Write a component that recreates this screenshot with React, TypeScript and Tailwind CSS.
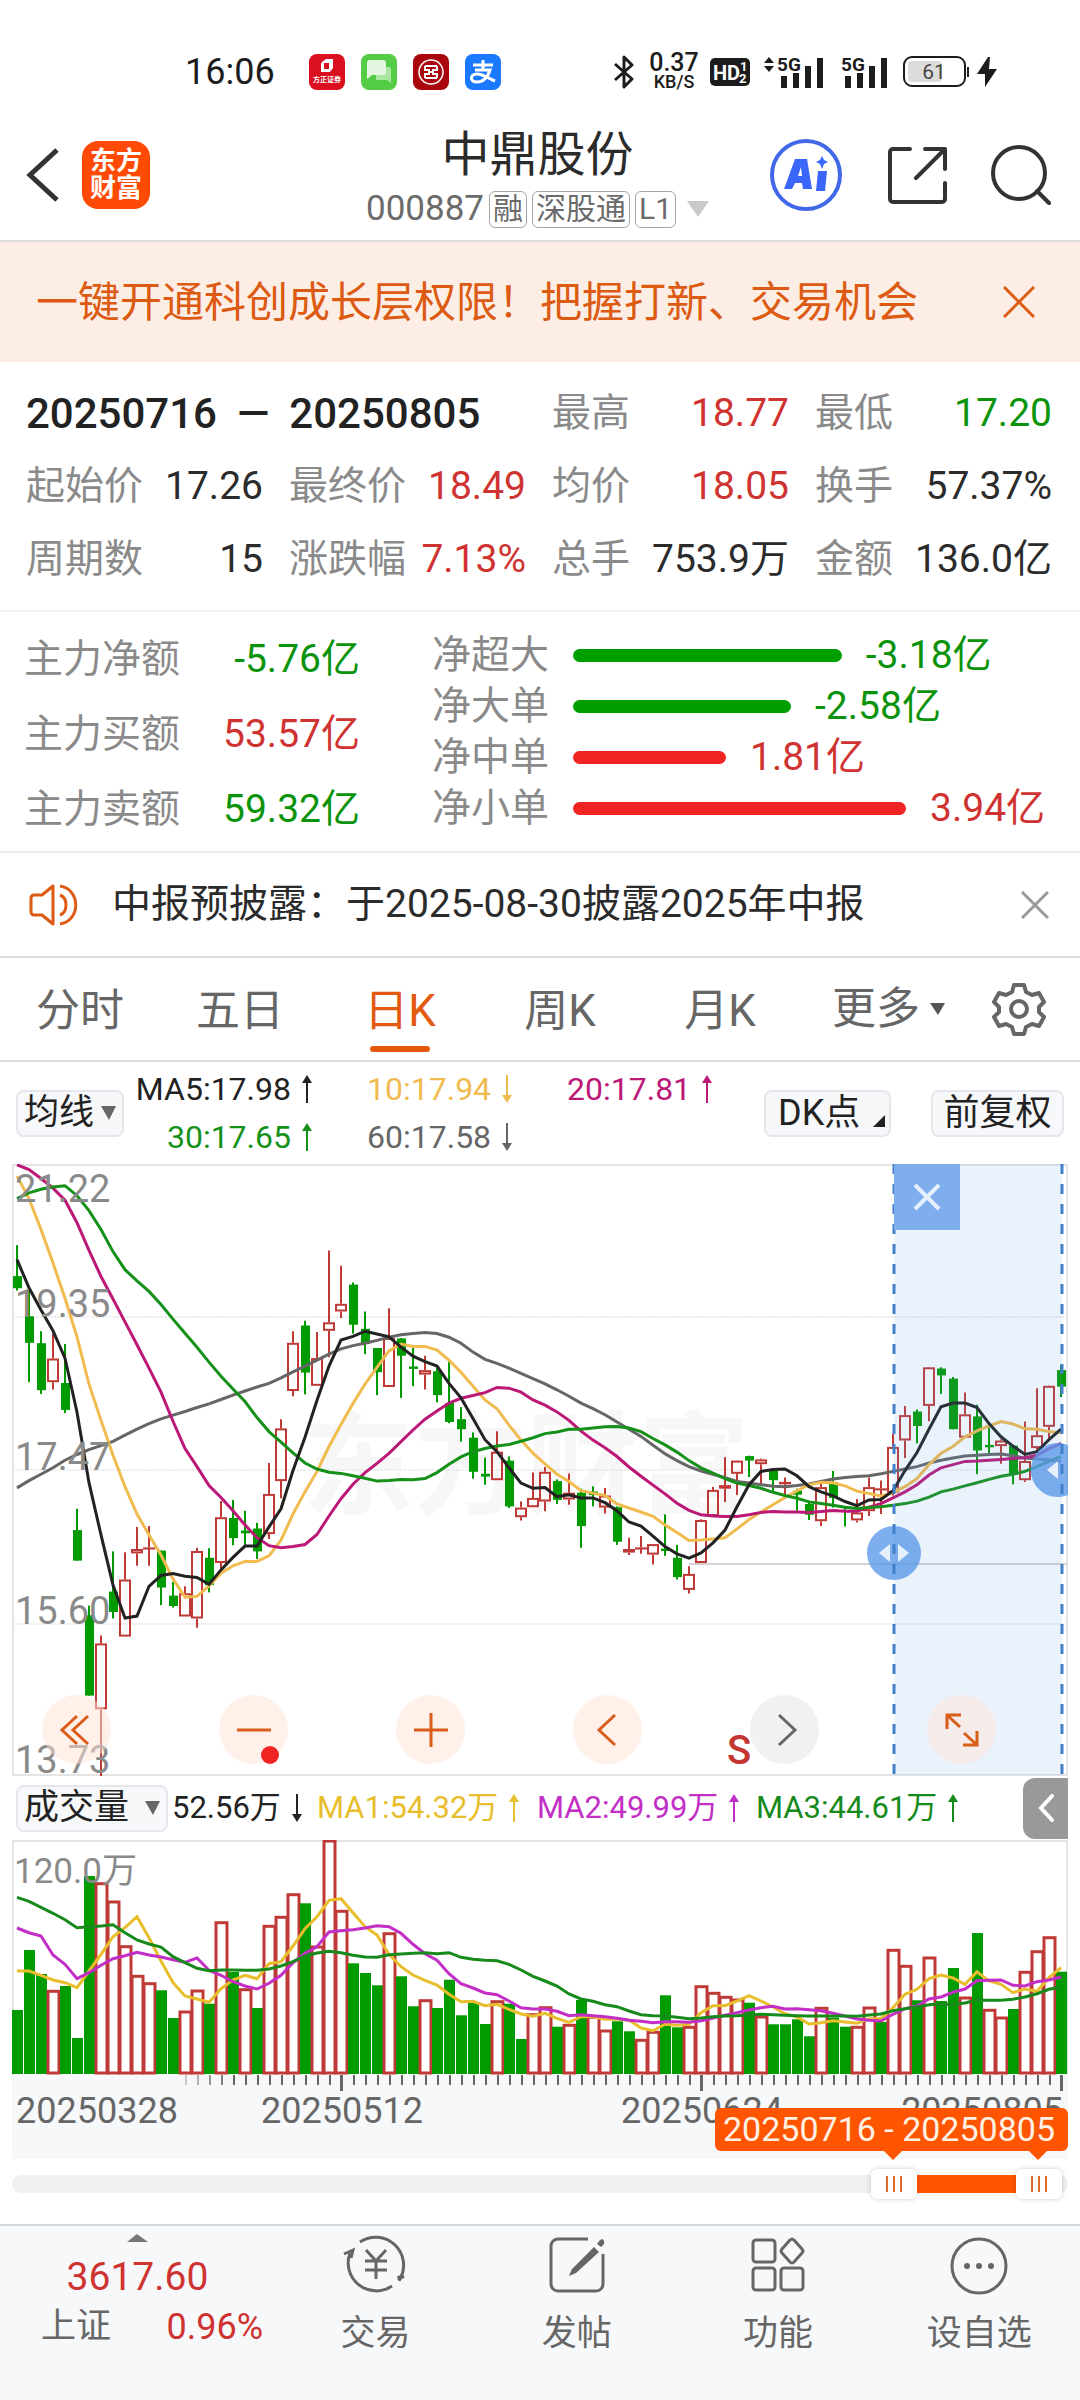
import { ReactNode, useState } from "react";
import { clsx } from "clsx";

type Tone = "red" | "green" | "dark";

const toneClass: Record<Tone, string> = {
  red: "text-[#cf3331]",
  green: "text-[#0c930c]",
  dark: "text-[#2b2b2b]",
};

const UP = "#bf3a36";
const DOWN = "#009b00";

// [u = up / d = down, high, body top, body bottom, low], 0 - 1568 down the chart
type Candle = [string, number, number, number, number];

const candles: Candle[] = [
  ["d", 234, 311, 341, 347], ["d", 340, 411, 477, 575], ["d", 448, 478, 595, 604], ["u", 455, 516, 575, 593],
  ["d", 480, 577, 644, 652], ["d", 890, 943, 1019, 1019], ["d", 1131, 1155, 1355, 1355], ["u", 1205, 1225, 1389, 1555],
  ["d", 996, 1096, 1147, 1163], ["u", 998, 1066, 1208, 1208], ["u", 935, 990, 1001, 1032], ["u", 933, 986, 990, 1032],
  ["d", 994, 994, 1086, 1130], ["d", 1072, 1106, 1132, 1136], ["u", 1083, 1100, 1158, 1158], ["u", 987, 995, 1163, 1186],
  ["d", 988, 1012, 1080, 1098], ["u", 871, 911, 1025, 1040], ["d", 868, 913, 963, 981], ["d", 895, 944, 951, 980],
  ["d", 925, 939, 996, 1015], ["u", 776, 853, 953, 965], ["u", 667, 690, 821, 864], ["u", 448, 477, 597, 610],
  ["d", 422, 434, 551, 605], ["u", 450, 515, 584, 584], ["u", 247, 426, 447, 513], ["u", 285, 380, 399, 415],
  ["d", 327, 332, 432, 454], ["d", 399, 442, 480, 505], ["d", 490, 490, 550, 607], ["u", 391, 465, 587, 587],
  ["d", 465, 466, 509, 614], ["d", 490, 536, 542, 585], ["u", 509, 545, 556, 593], ["d", 540, 548, 607, 625],
  ["d", 524, 627, 674, 677], ["d", 637, 667, 692, 723], ["d", 700, 713, 798, 815], ["d", 763, 803, 810, 830],
  ["u", 697, 748, 819, 819], ["d", 760, 770, 884, 888], ["u", 872, 887, 911, 919], ["u", 800, 863, 886, 886],
  ["u", 786, 798, 872, 896], ["d", 817, 821, 868, 878], ["u", 802, 850, 867, 880], ["d", 840, 850, 933, 987],
  ["d", 834, 847, 856, 884], ["u", 838, 857, 887, 902], ["d", 884, 886, 972, 980], ["u", 962, 990, 999, 1005],
  ["u", 958, 986, 990, 1002], ["u", 978, 978, 1004, 1029], ["d", 904, 989, 995, 1007], ["d", 980, 1012, 1060, 1066],
  ["u", 1033, 1052, 1092, 1101], ["u", 916, 918, 1025, 1025], ["u", 836, 843, 908, 908], ["u", 762, 831, 840, 873],
  ["u", 769, 770, 803, 856], ["d", 758, 759, 770, 811], ["u", 765, 767, 779, 830], ["d", 793, 796, 819, 846],
  ["u", 812, 823, 829, 866], ["d", 840, 845, 855, 895], ["d", 870, 878, 905, 918], ["u", 826, 836, 921, 933],
  ["d", 796, 824, 863, 887], ["d", 888, 893, 897, 934], ["u", 866, 899, 919, 924], ["u", 812, 836, 896, 908],
  ["u", 820, 839, 842, 903], ["u", 704, 736, 850, 857], ["u", 634, 657, 720, 764], ["d", 643, 648, 684, 727],
  ["u", 537, 538, 634, 672], ["d", 538, 541, 558, 604], ["d", 562, 566, 692, 692], ["u", 601, 655, 713, 713],
  ["d", 631, 660, 745, 804], ["d", 688, 731, 737, 752], ["u", 717, 720, 734, 778], ["d", 731, 733, 805, 829],
  ["u", 673, 771, 819, 823], ["u", 590, 707, 739, 746], ["u", 583, 584, 686, 715], ["d", 532, 545, 586, 612],
];

const priceLines = [
  {
    color: "#666666",
    data: [838, 820, 804, 788, 769, 755, 743, 733, 722, 707, 692, 678, 666, 657, 648, 638, 629, 618, 607, 597, 587, 578, 564, 549, 535, 520, 505, 492, 484, 478, 471, 463, 457, 454, 451, 454, 463, 478, 500, 518, 528, 540, 553, 566, 579, 594, 610, 627, 641, 656, 674, 692, 710, 732, 753, 770, 785, 796, 804, 813, 822, 826, 830, 834, 835, 832, 828, 822, 816, 812, 810, 808, 803, 797, 791, 785, 776, 769, 764, 759, 757, 755, 754, 758, 764, 766, 768, 772],
  },
  {
    color: "#f0bb4f",
    data: [62, 118, 195, 278, 366, 462, 580, 670, 757, 835, 903, 955, 1005, 1065, 1110, 1108, 1082, 1050, 1032, 1021, 1021, 1007, 968, 903, 848, 797, 735, 680, 628, 580, 538, 497, 480, 486, 486, 495, 520, 550, 585, 619, 641, 682, 719, 752, 778, 804, 822, 845, 851, 857, 878, 888, 898, 909, 930, 949, 969, 968, 965, 962, 940, 917, 898, 880, 862, 845, 830, 824, 825, 833, 846, 852, 858, 850, 835, 815, 780, 752, 735, 711, 696, 684, 673, 679, 691, 692, 698, 701],
  },
  {
    color: "#bb1877",
    data: [34, 46, 68, 92, 122, 178, 247, 312, 368, 425, 482, 540, 600, 672, 740, 785, 832, 862, 895, 930, 962, 982, 987, 984, 979, 954, 908, 865, 829, 800, 777, 752, 723, 694, 667, 647, 627, 615, 608, 601, 588, 590, 600, 619, 632, 649, 670, 697, 719, 738, 760, 786, 809, 831, 853, 876, 894, 905, 908, 909, 909, 905, 899, 897, 898, 898, 899, 897, 894, 896, 896, 886, 877, 863, 848, 830, 806, 788, 780, 772, 771, 769, 767, 765, 763, 757, 741, 727],
  },
  {
    color: "#15911a",
    data: [118, 104, 95, 89, 86, 111, 148, 195, 250, 295, 323, 349, 382, 418, 453, 488, 525, 560, 592, 623, 663, 698, 724, 751, 776, 791, 799, 802, 808, 814, 821, 820, 817, 818, 815, 800, 779, 761, 748, 740, 734, 730, 722, 713, 703, 699, 692, 692, 689, 686, 685, 689, 698, 715, 731, 749, 770, 788, 801, 815, 826, 832, 839, 849, 857, 864, 873, 877, 881, 886, 889, 887, 885, 881, 877, 871, 861, 848, 841, 833, 825, 817, 809, 804, 797, 785, 772, 760],
  },
  {
    color: "#222222",
    data: [270, 340, 395, 447, 515, 650, 825, 955, 1080, 1162, 1157, 1083, 1056, 1051, 1058, 1061, 1078, 1042, 1011, 983, 983, 935, 890, 795, 712, 620, 535, 470, 461, 448, 455, 462, 488, 510, 524, 535, 578, 614, 665, 718, 748, 788, 826, 839, 837, 860, 855, 863, 863, 875, 895, 923, 933, 958, 984, 1002, 1013, 1000, 975, 943, 885, 830, 797, 792, 791, 808, 835, 848, 858, 872, 882, 868, 867, 845, 795, 750, 692, 636, 627, 627, 638, 678, 711, 734, 755, 748, 718, 692],
  },
];

const volumes = [717, 537, 609, 658, 645, 801, 315, 335, 390, 524, 613, 635, 658, 741, 720, 657, 698, 452, 603, 653, 711, 463, 436, 368, 397, 525, 207, 418, 577, 606, 643, 485, 616, 706, 686, 711, 626, 733, 695, 759, 689, 698, 804, 728, 707, 767, 760, 687, 736, 777, 751, 781, 805, 781, 673, 769, 766, 644, 664, 676, 684, 695, 735, 760, 760, 745, 796, 709, 740, 767, 766, 708, 753, 535, 583, 688, 558, 690, 591, 678, 486, 715, 738, 714, 601, 539, 497, 602];

const volumeSides =
  "ddduddduuu" +
  "uudduududu" +
  "duuuduuudd" +
  "dudduddddd" +
  "udduududuu" +
  "dduudduuuu" +
  "ududdddudd" +
  "uuduududdu" +
  "duuduuud";

const volumeLines = [
  {
    color: "#e8be2c",
    data: [600, 600, 613, 627, 635, 650, 600, 550, 497, 470, 437, 500, 570, 635, 675, 684, 694, 653, 627, 613, 623, 578, 572, 525, 473, 437, 388, 383, 425, 467, 492, 550, 587, 612, 628, 642, 670, 692, 691, 704, 700, 715, 729, 736, 727, 742, 754, 737, 737, 745, 745, 747, 771, 779, 760, 763, 760, 725, 704, 704, 690, 674, 690, 708, 728, 738, 759, 755, 749, 753, 757, 743, 743, 710, 670, 655, 623, 612, 621, 640, 602, 630, 640, 665, 654, 661, 620, 590],
  },
  {
    color: "#c32fc6",
    data: [471, 485, 495, 552, 580, 623, 605, 583, 563, 554, 544, 552, 558, 566, 574, 561, 598, 613, 632, 645, 654, 637, 613, 575, 547, 527, 483, 479, 476, 471, 464, 467, 487, 520, 548, 568, 608, 638, 651, 666, 671, 690, 710, 714, 714, 721, 734, 731, 734, 737, 742, 748, 751, 755, 752, 752, 754, 749, 741, 733, 725, 717, 710, 706, 714, 713, 716, 719, 727, 735, 744, 748, 750, 730, 713, 705, 684, 678, 664, 654, 629, 628, 627, 643, 645, 632, 627, 618],
  },
  {
    color: "#178a1c",
    data: [379, 391, 409, 427, 446, 470, 467, 465, 461, 485, 507, 519, 528, 557, 575, 592, 599, 597, 597, 598, 598, 594, 585, 572, 555, 546, 541, 545, 553, 558, 559, 551, 549, 547, 545, 548, 545, 559, 565, 568, 569, 580, 597, 616, 630, 645, 669, 684, 691, 701, 707, 720, 731, 734, 735, 739, 743, 741, 737, 735, 734, 732, 730, 731, 733, 734, 735, 735, 735, 735, 736, 732, 729, 719, 713, 708, 701, 699, 700, 696, 687, 688, 688, 685, 678, 668, 655, 648],
  },
];

const xAt = (i: number) => 5 + i * 12;
const priceY = (v: number) => Math.round(((v - 32) * 6120) / 1523) / 10;
const volumeY = (v: number) => Math.round((v - 207) / 0.3) / 10;

const toPoints = (data: number[], y: (v: number) => number) =>
  data.map((v, i) => `${xAt(i)},${y(v)}`).join(" ");

function StatusBar() {
  return (
    <div className="flex items-center justify-between pt-[34px] pl-[185px] pr-[83px] h-[110px] text-[#1c1c1c]">
      <div className="flex items-center">
        <span className="text-[36px] leading-none w-[124px]">16:06</span>
        <div className="flex gap-4">
          <svg className="size-9" viewBox="0 0 36 36">
            <rect width="36" height="36" rx="8" fill="#da1020" />
            <path d="M13 8l4-3h7v9l-3 4h-9v-8z M15 9v6h5v-6z" fill="#fff" fillRule="evenodd" />
            <text x="18" y="28" textAnchor="middle" fontSize="7" fontWeight="700" fill="#fff">方正证券</text>
          </svg>
          <svg className="size-9" viewBox="0 0 36 36">
            <rect width="36" height="36" rx="8" fill="#55cc45" />
            <path d="M15 13h13a2 2 0 0 1 2 2v14l-4-3H15z" fill="#a9e6a0" />
            <path d="M8 6h14a3 3 0 0 1 3 3v9a3 3 0 0 1-3 3H11l-5 4V9a3 3 0 0 1 2-3z" fill="#e4f8e1" />
          </svg>
          <svg className="size-9" viewBox="0 0 36 36">
            <rect width="36" height="36" rx="8" fill="#a9070d" />
            <circle cx="18" cy="18" r="12" fill="none" stroke="#fff" strokeWidth="1.5" />
            <path d="M12 12h12M12 24h12M12 12v4h4v4h-4v4M24 12v4h-4v4h4v4M16 18h4" fill="none" stroke="#fff" strokeWidth="2" />
          </svg>
          <svg className="size-9" viewBox="0 0 36 36">
            <rect width="36" height="36" rx="8" fill="#1a79ff" />
            <path d="M8 11h20M18 6v11M10 16h15c-2 6-6 12-13 12-8 0-7-8 0-8 6 0 11 4 18 7" fill="none" stroke="#fff" strokeWidth="3" />
          </svg>
        </div>
      </div>
      <div className="flex items-center">
        <svg className="w-5 h-[34px]" viewBox="0 0 20 34" fill="none" stroke="currentColor" strokeWidth="3">
          <path d="M1 9l17 15-8 8V2l8 8L1 25" strokeLinejoin="round" />
        </svg>
        <div className="flex flex-col items-center w-[48px] ml-4 font-medium">
          <span className="text-[25px] leading-[19px]">0.37</span>
          <span className="text-[18px] leading-[19px]">KB/S</span>
        </div>
        <svg className="w-10 h-7 ml-3" viewBox="0 0 40 28">
          <rect width="40" height="28" rx="5" fill="currentColor" />
          <text x="3" y="22" fontSize="20" fontWeight="700" fill="#fff">HD</text>
          <text x="30" y="13" fontSize="13" fontWeight="700" fill="#fff">1</text>
          <text x="29" y="25" fontSize="13" fontWeight="700" fill="#fff">2</text>
        </svg>
        <svg className="w-[61px] h-8 ml-[14px] overflow-visible" viewBox="0 0 61 32" fill="currentColor">
          <path d="M0 7l5-6 5 6zM0 10l5 6 5-6z" />
          <text x="13" y="15" fontSize="19" fontWeight="700">5G</text>
          <path d="M17 20h6v12h-6zM29 17h6v15h-6zM41 10h6v22h-6zM53 2h6v30h-6z" />
        </svg>
        <svg className="w-12 h-8 ml-4 overflow-visible" viewBox="0 0 48 32" fill="currentColor">
          <text x="0" y="15" fontSize="19" fontWeight="700">5G</text>
          <path d="M4 20h6v12H4zM16 17h6v15h-6zM28 10h6v22h-6zM40 2h6v30h-6z" />
        </svg>
        <svg className="w-[67px] h-8 ml-[14px]" viewBox="0 0 67 32">
          <rect x="1" y="1" width="61" height="29" rx="8" fill="none" stroke="currentColor" strokeWidth="2" />
          <rect x="5" y="5" width="34" height="21" rx="4" fill="#dcdcdc" />
          <path d="M65 11v10" stroke="currentColor" strokeWidth="2" />
          <text x="31" y="23" textAnchor="middle" fontSize="21" fill="#444">61</text>
        </svg>
        <svg className="w-5 h-8 ml-[7px]" viewBox="0 0 20 32" fill="currentColor">
          <path d="M11 1L0 18h8v13l12-18h-8l1-12z" />
        </svg>
      </div>
    </div>
  );
}

function Header() {
  return (
    <header className="grid grid-cols-[1fr_auto_1fr] items-center h-[132px] pl-6 pr-[29px] border-b-2 border-[#dcdcdc]">
      <div className="flex items-center gap-[22px]">
        <button aria-label="返回">
          <svg className="w-9 h-14" viewBox="0 0 36 56" fill="none" stroke="#333" strokeWidth="5">
            <path d="M33 3L6 28l27 25" />
          </svg>
        </button>
        <div className="size-[68px] rounded-2xl bg-[#ff4a05] text-white font-bold text-[26px] leading-[27px] text-center pt-[7px]">
          东方
          <br />
          财富
        </div>
      </div>
      <div className="flex flex-col items-center pt-2.5 text-[#2b2b2b]">
        <h1 className="text-[48px] leading-[58px]">中鼎股份</h1>
        <div className="flex items-center gap-[5px] h-[50px] text-[#6b6b6b]">
          <span className="text-[35px]">000887</span>
          {["融", "深股通", "L1"].map((tag) => (
            <span key={tag} className="h-[37px] px-[3px] border border-[#a5a5a5] rounded-md text-[30px] leading-[34px]">
              {tag}
            </span>
          ))}
          <svg className="w-[22px] h-4 ml-1.5" viewBox="0 0 22 16" fill="#c9c9c9">
            <path d="M0 0h22L11 16z" />
          </svg>
        </div>
      </div>
      <div className="flex items-center justify-end gap-[44px]">
        <button aria-label="Ai">
          <svg className="size-[73px]" viewBox="0 0 73 73">
            <circle cx="36" cy="36" r="34" fill="none" stroke="#4068e8" strokeWidth="4" />
            <path
              d="M25 20h12l5 30h-9l-1-6h-7l-3 6h-8zM31 28l-3 9h4zM48 32h9l-2 20h-9z"
              fill="#3a66fb"
              fillRule="evenodd"
            />
            <path d="M52 17l2 4 4 2-4 2-2 5-2-5-4-2 4-2z" fill="#3a66fb" />
          </svg>
        </button>
        <button aria-label="分享">
          <svg className="size-[60px]" viewBox="0 0 60 60" fill="none" stroke="#333" strokeWidth="4" strokeLinecap="round" strokeLinejoin="round">
            <path d="M23 4H6a3 3 0 0 0-3 3v47a3 3 0 0 0 3 3h49a3 3 0 0 0 3-3V38M38 4h20v20M58 4L29 33" />
          </svg>
        </button>
        <button aria-label="搜索">
          <svg className="size-[60px]" viewBox="0 0 60 60" fill="none" stroke="#333" strokeWidth="4" strokeLinecap="round">
            <circle cx="28" cy="28" r="26" />
            <path d="M46 46l12 12" />
          </svg>
        </button>
      </div>
    </header>
  );
}

interface StatProps {
  label: string;
  value: string;
  tone?: Tone;
}

function Stat({ label, value, tone = "dark" }: StatProps) {
  return (
    <div className="flex items-center justify-between h-[73px] whitespace-nowrap">
      <dt className="text-[#8a8a8a]">{label}</dt>
      <dd className={toneClass[tone]}>{value}</dd>
    </div>
  );
}

const stats: StatProps[] = [
  { label: "最高", value: "18.77", tone: "red" },
  { label: "最低", value: "17.20", tone: "green" },
  { label: "起始价", value: "17.26" },
  { label: "最终价", value: "18.49", tone: "red" },
  { label: "均价", value: "18.05", tone: "red" },
  { label: "换手", value: "57.37%" },
  { label: "周期数", value: "15" },
  { label: "涨跌幅", value: "7.13%", tone: "red" },
  { label: "总手", value: "753.9万" },
  { label: "金额", value: "136.0亿" },
];

const mainFlows: StatProps[] = [
  { label: "主力净额", value: "-5.76亿", tone: "green" },
  { label: "主力买额", value: "53.57亿", tone: "red" },
  { label: "主力卖额", value: "59.32亿", tone: "green" },
];

const netFlows = [
  { label: "净超大", value: -3.18 },
  { label: "净大单", value: -2.58 },
  { label: "净中单", value: 1.81 },
  { label: "净小单", value: 3.94 },
];

function Flows() {
  return (
    <section className="flex items-start h-[241px] px-6 border-b-2 border-[#ececec] text-[39px]">
      <dl className="w-[336px] pt-2.5">
        {mainFlows.map((f) => (
          <div key={f.label} className="flex items-center justify-between h-[75px]">
            <dt className="text-[#8a8a8a]">{f.label}</dt>
            <dd className={toneClass[f.tone ?? "dark"]}>{f.value}</dd>
          </div>
        ))}
      </dl>
      <dl className="flex-1 pt-[18px] pl-[72px]">
        {netFlows.map((f) => (
          <div key={f.label} className="flex items-center h-[51px] whitespace-nowrap">
            <dt className="w-[141px] shrink-0 text-[#8a8a8a]">{f.label}</dt>
            <dd className={clsx("flex flex-1 items-center gap-6", f.value < 0 ? toneClass.green : toneClass.red)}>
              <span
                className={clsx("h-[13px] rounded-full", f.value < 0 ? "bg-[#009f00]" : "bg-[#f12424]")}
                style={{ width: `${Math.abs(f.value) * 17.5}%` }}
              />
              {f.value.toFixed(2)}亿
            </dd>
          </div>
        ))}
      </dl>
    </section>
  );
}

function Arrow({ up, className }: { up?: boolean; className?: string }) {
  return (
    <svg className={clsx("shrink-0 w-3 h-7", className)} viewBox="0 0 12 28" fill="currentColor">
      <path d={up ? "M6 0l5 8H7v20H5V8H1z" : "M6 28l5-8H7V0H5v20H1z"} />
    </svg>
  );
}

const tabs = ["分时", "五日", "日K", "周K", "月K"];

function Tabs() {
  const [active, setActive] = useState("日K");

  return (
    <nav className="flex items-center h-[104px] pr-[34px] border-b-2 border-[#dcdcdc] text-[44px] text-[#666] whitespace-nowrap">
      {tabs.map((t) => (
        <button
          key={t}
          onClick={() => setActive(t)}
          className={clsx("flex flex-col items-center justify-between w-40 h-full pt-5", active === t && "text-[#e2590f]")}
        >
          {t}
          <span className={clsx("w-[60px] h-1.5 mb-2 rounded-full", active === t && "bg-[#e5570b]")} />
        </button>
      ))}
      <button className="flex items-center gap-2.5 ml-8">
        更多
        <svg className="w-[15px] h-3" viewBox="0 0 15 12" fill="#555">
          <path d="M0 0h15L8 12z" />
        </svg>
      </button>
      <button aria-label="设置" className="ml-auto">
        <svg className="size-[54px]" viewBox="0 0 54 54" fill="none" stroke="#666" strokeWidth="4" strokeLinejoin="round">
          <path d="M22 3h10l2 7 6 3 7-2 5 9-5 5v5l5 5-5 9-7-2-6 3-2 7H22l-2-7-6-3-7 2-5-9 5-5v-5l-5-5 5-9 7 2 6-3z" />
          <circle cx="27" cy="27" r="8" />
        </svg>
      </button>
    </nav>
  );
}

function Picker({ label, options, className }: { label: string; options: string[]; className: string }) {
  return (
    <div className={clsx("relative shrink-0 h-[47px]", className)}>
      <select
        aria-label={label}
        className="block appearance-none w-full h-full pl-1.5 bg-[#f7f8fa] border-2 border-[#e6e7ec] rounded-lg text-[35px] leading-10 text-[#222]"
      >
        {options.map((o) => (
          <option key={o}>{o}</option>
        ))}
      </select>
      <svg className="absolute right-2 top-4 w-[15px] h-3.5 pointer-events-none" viewBox="0 0 15 14" fill="#666">
        <path d="M0 0h15L8 14z" />
      </svg>
    </div>
  );
}

function Averages() {
  return (
    <div className="flex items-center h-[102px] pl-4 pr-4 text-[32px] whitespace-nowrap">
      <Picker label="指标" options={["均线", "BOLL"]} className="w-[108px]" />
      <div className="grid grid-cols-[189px_200px_1fr] flex-1 self-start pt-[3px] leading-[48px]">
        <span className="flex items-center justify-end gap-2.5 text-[#222]">
          MA5:17.98 <Arrow up />
        </span>
        <span className="flex items-center gap-2.5 pl-[54px] text-[#f0bb4f]">
          10:17.94 <Arrow />
        </span>
        <span className="flex items-center gap-2.5 pl-[54px] text-[#bb1877]">
          20:17.81 <Arrow up />
        </span>
        <span className="flex items-center justify-end gap-2.5 text-[#15911a]">
          30:17.65 <Arrow up />
        </span>
        <span className="flex items-center gap-2.5 pl-[54px] text-[#666]">
          60:17.58 <Arrow />
        </span>
      </div>
      <button className="relative w-[127px] h-[47px] pl-3 text-left bg-[#f7f8fa] border-2 border-[#e6e7ec] rounded-lg text-[36px] leading-10 text-[#222]">
        DK点
        <svg className="absolute right-1 bottom-2 w-3 h-3" viewBox="0 0 12 12" fill="#222">
          <path d="M12 0v12H0z" />
        </svg>
      </button>
      <button className="w-[133px] h-[47px] ml-10 bg-[#f7f8fa] border-2 border-[#e6e7ec] rounded-lg text-[36px] leading-10 text-[#222]">
        前复权
      </button>
    </div>
  );
}

function RoundButton({ label, muted, children }: { label: string; muted?: boolean; children: ReactNode }) {
  return (
    <button
      aria-label={label}
      className={clsx(
        "flex items-center justify-center size-[69px] rounded-full",
        muted ? "bg-[#f0f0f0]/90 text-[#666]" : "bg-[#ffe4d6]/50 text-[#d95c18]"
      )}
    >
      <svg className="size-9 overflow-visible" viewBox="0 0 36 36" fill="none" stroke="currentColor" strokeWidth="3">
        {children}
      </svg>
    </button>
  );
}

function PriceChart() {
  return (
    <div className="relative">
      <svg className="block w-full h-auto" viewBox="0 0 1056 612">
        <text x="290" y="342" fontSize="112" fontWeight="700" fill="#f7f7f7">
          东方财富
        </text>
        {[153, 306, 460].map((y) => (
          <line key={y} x1="0" x2="1056" y1={y} y2={y} stroke="#dadada" strokeDasharray="2 1" />
        ))}
        <line x1="677" x2="1056" y1="400" y2="400" stroke="#d3d3d3" strokeWidth="2" />
        <path d="M0 1h1056M0 611h1056M1 0v612M1055 0v612" fill="none" stroke="#e4e4e4" strokeWidth="2" />
        {candles.map(([side, high, top, bottom, low], i) => {
          const x = xAt(i);
          const t = priceY(top);
          const b = priceY(bottom);
          if (side === "d") {
            return (
              <g key={i} fill={DOWN}>
                <rect x={x - 1} y={priceY(high)} width="2" height={priceY(low) - priceY(high)} />
                <rect x={x - 4} y={t} width="9" height={Math.max(b - t, 2)} />
              </g>
            );
          }
          return (
            <g key={i} fill="none" stroke={UP} strokeWidth="2">
              <path d={`M${x} ${priceY(high)}V${t}M${x} ${b}V${priceY(low)}`} />
              <rect x={x - 5} y={t + 1} width="10" height={Math.max(b - t - 2, 0.1)} />
            </g>
          );
        })}
        {priceLines.map((l) => (
          <polyline key={l.color} points={toPoints(l.data, priceY)} fill="none" stroke={l.color} strokeWidth="3" />
        ))}
        <g fontSize="38" fill="#8a8a8a">
          <text x="3" y="38">21.22</text>
          <text x="3" y="153">19.35</text>
          <text x="3" y="306">17.47</text>
          <text x="3" y="460">15.60</text>
          <text x="3" y="609">13.73</text>
        </g>
        <text x="715" y="600" fontSize="40" fontWeight="500" fill="#c23531">
          S
        </text>
        <rect x="882" y="0" width="168" height="611" fill="#5b9be8" opacity="0.13" />
        <g fill="#5c9ae9" opacity="0.8">
          <circle cx="882" cy="389" r="27" />
          <path d="M1056 281a27 27 0 1 0 0 50z" />
        </g>
        <path d="M878 380v18l-11-9zM886 380v18l11-9zM1046 297v18l-11-9z" fill="#e6f0fc" />
        <path d="M882 0v611M1050 0v611" stroke="#4380cb" strokeWidth="3" strokeDasharray="10 10" />
      </svg>
      <button aria-label="关闭区间" className="absolute top-0 right-[108px] flex items-center justify-center size-[66px] bg-[#7eaeee]">
        <svg className="size-7" viewBox="0 0 28 28" stroke="#e6f0fc" strokeWidth="4">
          <path d="M2 2l24 24M26 2L2 26" />
        </svg>
      </button>
      <div className="absolute bottom-3 left-[30px] right-[72px] flex justify-between">
        <RoundButton label="最左">
          <path d="M18 4L3 18l15 14M29 4L14 18l15 14" />
        </RoundButton>
        <RoundButton label="缩小">
          <path d="M1 18h34" />
          <circle cx="34" cy="43" r="9" fill="#f12424" stroke="none" />
        </RoundButton>
        <RoundButton label="放大">
          <path d="M1 18h34M18 1v34" />
        </RoundButton>
        <RoundButton label="左移">
          <path d="M25 3L9 18l16 15" />
        </RoundButton>
        <RoundButton label="右移" muted>
          <path d="M12 3l16 15-16 15" />
        </RoundButton>
        <RoundButton label="全屏">
          <path d="M17 3H3v14M3 3l13 12M33 19v14H19M33 33L20 21" />
        </RoundButton>
      </div>
    </div>
  );
}

function VolumeHeader() {
  return (
    <div className="flex items-center h-16 pl-1 text-[31px] whitespace-nowrap">
      <Picker label="副图指标" options={["成交量", "MACD", "KDJ"]} className="w-[152px]" />
      <span className="flex items-center w-[149px] pl-1 text-[#222]">
        52.56万 <Arrow className="ml-2.5" />
      </span>
      <span className="flex items-center w-[220px] text-[#e8be2c]">
        MA1:54.32万 <Arrow up className="ml-2.5" />
      </span>
      <span className="flex items-center w-[219px] text-[#c32fc6]">
        MA2:49.99万 <Arrow up className="ml-2.5" />
      </span>
      <span className="flex items-center text-[#178a1c]">
        MA3:44.61万 <Arrow up className="ml-2.5" />
      </span>
      <button aria-label="展开" className="flex items-center justify-center ml-auto w-[45px] h-[61px] rounded-l-xl bg-[#999]">
        <svg className="w-4 h-7" viewBox="0 0 16 28" fill="none" stroke="#fff" strokeWidth="4" strokeLinecap="round">
          <path d="M14 2L3 14l11 12" />
        </svg>
      </button>
    </div>
  );
}

function VolumeChart() {
  return (
    <svg className="block w-full h-auto" viewBox="0 0 1056 235">
      <path d="M0 1h1056M1 0v235M1055 0v235" fill="none" stroke="#e4e4e4" strokeWidth="2" />
      {volumes.map((v, i) => {
        const x = xAt(i);
        const y = volumeY(v);
        return volumeSides[i] === "d" ? (
          <rect key={i} x={x - 5} y={y} width="11" height={234 - y} fill={DOWN} />
        ) : (
          <rect key={i} x={x - 5} y={y + 1} width="11" height={232 - y} fill="#fff" stroke={UP} strokeWidth="3" />
        );
      })}
      {volumeLines.map((l) => (
        <polyline key={l.color} points={toPoints(l.data, volumeY)} fill="none" stroke={l.color} strokeWidth="3" />
      ))}
      <text x="2" y="43" fontSize="35" fill="#8a8a8a">
        120.0万
      </text>
    </svg>
  );
}

function Axis() {
  return (
    <div className="relative">
      <svg className="block w-full h-auto bg-[#f7f8fa]" viewBox="0 0 1056 84" fill="#666">
        {volumes.map((_, i) => {
          if (i < 14) return null;
          const long = i % 30 === 27;
          return (
            <rect
              key={i}
              x={long ? xAt(i) - 1 : xAt(i)}
              y="0"
              width={long ? 3 : 2}
              height={long ? 16 : 10}
              opacity={Math.min((i - 12) / 6, 1)}
            />
          );
        })}
        <g fontSize="36">
          <text x="4" y="48">20250328</text>
          <text x="330" y="48" textAnchor="middle">20250512</text>
          <text x="690" y="48" textAnchor="middle">20250624</text>
          <text x="1051" y="48" textAnchor="end">20250805</text>
        </g>
      </svg>
      <div className="absolute right-0 top-[33px] px-2 h-[43px] rounded-md bg-[#ff5500] text-[#fff1e4] text-[34px] leading-[43px] whitespace-nowrap w-[353px]">
        20250716 - 20250805
        <svg className="absolute right-5 top-full w-[164px] h-[9px]" viewBox="0 0 164 9" fill="#ff5500">
          <path d="M0 0h18L9 9zM145 0h18l-9 9z" />
        </svg>
      </div>
    </div>
  );
}

const thumb =
  "absolute inset-0 w-full h-full appearance-none bg-transparent pointer-events-none [&::-webkit-slider-thumb]:pointer-events-auto [&::-webkit-slider-thumb]:appearance-none [&::-webkit-slider-thumb]:w-[46px] [&::-webkit-slider-thumb]:h-[30px] [&::-webkit-slider-thumb]:rounded-md [&::-webkit-slider-thumb]:bg-white [&::-webkit-slider-thumb]:shadow-[0_0_5px_rgba(0,0,0,0.2)] [&::-webkit-slider-thumb]:bg-[linear-gradient(90deg,transparent_15px,#dd6a2a_15px,#dd6a2a_17px,transparent_17px,transparent_22px,#dd6a2a_22px,#dd6a2a_24px,transparent_24px,transparent_29px,#dd6a2a_29px,#dd6a2a_31px,transparent_31px)] [&::-webkit-slider-thumb]:bg-[length:46px_16px] [&::-webkit-slider-thumb]:bg-center [&::-webkit-slider-thumb]:bg-no-repeat";

function RangeSlider() {
  const [from, setFrom] = useState(850);
  const [to, setTo] = useState(994);

  return (
    <div className="relative flex items-center h-[30px] mt-2.5 mb-[25px]">
      <div className="w-full h-[18px] rounded-full bg-[#f0f0f3]">
        <div
          className="h-full bg-[#ff5500]"
          style={{ marginLeft: `${from / 10}%`, width: `${(to - from) / 10 - 1}%` }}
        />
      </div>
      <input
        type="range"
        aria-label="开始日期"
        min={0}
        max={1000}
        value={from}
        onChange={(e) => setFrom(Math.min(Number(e.target.value), to))}
        className={thumb}
      />
      <input
        type="range"
        aria-label="结束日期"
        min={0}
        max={1000}
        value={to}
        onChange={(e) => setTo(Math.max(Number(e.target.value), from))}
        className={thumb}
      />
    </div>
  );
}

function NavItem({ label, children }: { label: string; children: ReactNode }) {
  return (
    <button className="flex flex-col items-center pt-2 text-[35px] leading-[48px]">
      <svg className="w-[68px] h-[62px] mb-[14px]" viewBox="0 0 68 62" fill="none" stroke="#666" strokeWidth="3">
        {children}
      </svg>
      {label}
    </button>
  );
}

function BottomNav() {
  return (
    <nav className="grid grid-cols-[275px_repeat(4,1fr)] items-start h-[176px] bg-[#f7f8fa] border-t-2 border-[#d5d8dd] text-[#666]">
      <a href="#index" className="block pt-2">
        <svg className="block mx-auto w-[21px] h-2" viewBox="0 0 21 8" fill="#777">
          <path d="M0 8L10 0l11 8z" />
        </svg>
        <div className="text-[39px] leading-[50px] mt-2.5 text-center text-[#cf3331]">3617.60</div>
        <div className="flex justify-between items-center pl-[41px] pr-3 text-[35px] leading-[50px]">
          上证<span className="text-[36px] text-[#cf3331]">0.96%</span>
        </div>
      </a>
      <NavItem label="交易">
        <path d="M18 8a28 28 0 0 1 40 37l-2-3M56 46l6-4M50 52A28 28 0 0 1 8 19M2 20l9-4-2 8" />
        <path d="M24 16l10 11 10-11M23 27h22M23 36h22M34 27v18" />
      </NavItem>
      <NavItem label="发帖">
        <path d="M45 5H15a7 7 0 0 0-7 7v38a7 7 0 0 0 7 7h38a7 7 0 0 0 7-7V20" />
        <path d="M51 13l5 5-23 21-7 3 3-7zM54 10l3-4c3-2 5 1 4 4l-3 3z" fill="#666" stroke="none" />
      </NavItem>
      <NavItem label="功能">
        <rect x="9" y="6" width="22" height="22" rx="3" />
        <rect x="9" y="34" width="22" height="22" rx="3" />
        <rect x="37" y="34" width="22" height="22" rx="3" />
        <path d="M46 6l-8 9q-2 2 0 4l8 9q2 2 4 0l8-9q2-2 0-4l-8-9q-2-2-4 0z" />
      </NavItem>
      <NavItem label="设自选">
        <circle cx="34" cy="32" r="27" />
        <path d="M19 32a3 3 0 1 1 6 0 3 3 0 1 1-6 0zM31 32a3 3 0 1 1 6 0 3 3 0 1 1-6 0zM43 32a3 3 0 1 1 6 0 3 3 0 1 1-6 0z" fill="#666" stroke="none" />
      </NavItem>
    </nav>
  );
}

export default function App() {
  return (
    <div className="bg-white font-[Roboto,'Noto_Sans_CJK_SC',sans-serif]">
      <StatusBar />
      <Header />
      <div className="flex items-center justify-between h-[120px] pl-[36px] pr-[45px] bg-[#fceee5] text-[#dc5a12] text-[42px] whitespace-nowrap">
        <a href="#open">一键开通科创成长层权限！把握打新、交易机会</a>
        <button aria-label="关闭">
          <svg className="size-8" viewBox="0 0 32 32" stroke="currentColor" strokeWidth="3">
            <path d="M1 1l30 30M31 1L1 31" />
          </svg>
        </button>
      </div>
      <dl className="grid grid-cols-4 gap-x-[26px] pl-[26px] pr-[28px] pt-[15px] pb-3.5 border-b-2 border-[#f3f3f5] text-[39px]">
        <div className="col-span-2 flex items-center gap-5 text-[42px] font-medium text-[#222]">
          <span>20250716</span>
          <span>—</span>
          <span>20250805</span>
        </div>
        {stats.map((s) => (
          <Stat key={s.label} {...s} />
        ))}
      </dl>
      <Flows />
      <div className="flex items-center h-[105px] pl-[29px] pr-[31px] border-b-2 border-[#dcdcdc] text-[39px] text-[#2b2b2b] whitespace-nowrap">
        <svg className="w-[54px] h-11" viewBox="0 0 54 44" fill="none" stroke="#dc5a12" strokeWidth="3">
          <path d="M24 3v38L13 32H5a3 3 0 0 1-3-3V15a3 3 0 0 1 3-3h8z" strokeLinejoin="round" />
          <path d="M31 12c8 3 8 17 0 20M31 3c21 3 21 35 0 38" />
        </svg>
        <p className="ml-[29px]">中报预披露：于2025-08-30披露2025年中报</p>
        <button aria-label="关闭公告" className="ml-auto">
          <svg className="size-7" viewBox="0 0 28 28" stroke="#999" strokeWidth="3">
            <path d="M1 1l26 26M27 1L1 27" />
          </svg>
        </button>
      </div>
      <Tabs />
      <Averages />
      <main className="px-3">
        <PriceChart />
        <VolumeHeader />
        <VolumeChart />
        <Axis />
        <RangeSlider />
      </main>
      <BottomNav />
    </div>
  );
}
